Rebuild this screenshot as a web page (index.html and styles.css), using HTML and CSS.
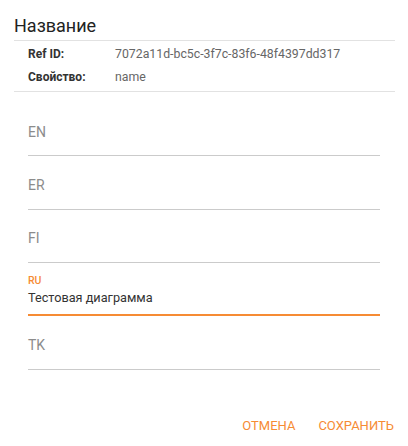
FILE: index.html
```html
<!DOCTYPE html>
<html lang="ru">
<head>
  <meta charset="UTF-8">
  <title>Название</title>
  <link rel="stylesheet" href="styles.css">
</head>
<body>
  <div class="dialog">
    <h2 class="dialog-title">Название</h2>

    <div class="meta">
      <div class="meta-row">
        <span class="meta-label">Ref ID:</span>
        <span class="meta-value">7072a11d-bc5c-3f7c-83f6-48f4397dd317</span>
      </div>
      <div class="meta-row">
        <span class="meta-label">Свойство:</span>
        <span class="meta-value">name</span>
      </div>
    </div>

    <form class="fields" onsubmit="return false;">
      <div class="field"><label class="field-label">EN</label></div>
      <div class="field"><label class="field-label">ER</label></div>
      <div class="field"><label class="field-label">FI</label></div>
      <div class="field focused">
        <label class="field-label small">RU</label>
        <div class="field-value">Тестовая диаграмма</div>
      </div>
      <div class="field"><label class="field-label">TK</label></div>
    </form>

    <div class="actions">
      <button type="button" class="text-button">Отмена</button>
      <button type="button" class="text-button">Сохранить</button>
    </div>
  </div>
</body>
</html>
```

FILE: styles.css
```css
html, body {
  margin: 0;
  background: #fff;
}

body {
  font-family: Roboto, "Noto Sans", Arial, sans-serif;
  color: #212121;
}

.dialog {
  width: 408px;
  height: 446px;
  padding: 0 13px 0 14px;
  box-sizing: border-box;
}

.dialog-title {
  margin: 0;
  padding: 14px 0 2px;
  font-size: 18px;
  font-weight: 400;
  line-height: 24px;
  color: #222;
}

.meta {
  border-top: 1px solid #e2e2e2;
  border-bottom: 1px solid #e2e2e2;
  padding: 2px 14px;
}

.meta-row {
  display: flex;
  font-size: 12px;
  line-height: 23px;
}

.meta-label {
  width: 87px;
  font-weight: 700;
  color: #333;
}

.meta-value {
  font-size: 12.3px;
  color: #666;
}

.fields {
  margin: 11px 15px 0 14px;
}

.field {
  height: 53.333px;
  box-sizing: border-box;
  border-bottom: 1px solid #cbcbcb;
  display: flex;
  flex-direction: column;
  justify-content: flex-end;
  padding-bottom: 15.5px;
}

.field-label {
  font-size: 14px;
  line-height: 16px;
  color: #8c8c8c;
}

.field.focused {
  border-bottom: 2px solid #f68b34;
  padding-bottom: 8.5px;
}

.field-label.small {
  font-size: 10.5px;
  line-height: 12px;
  font-weight: 500;
  color: #f68b34;
  margin-bottom: 2.7px;
}

.field-value {
  font-size: 12.7px;
  line-height: 16px;
  color: #333;
}

.actions {
  display: flex;
  justify-content: flex-end;
  gap: 7px;
  margin: 40px -7px 0 0;
}

.text-button {
  font-family: inherit;
  font-size: 13px;
  font-weight: 400;
  text-transform: uppercase;
  color: #f68b34;
  background: none;
  border: none;
  padding: 6px 8px;
  line-height: 20px;
  cursor: pointer;
}
```
